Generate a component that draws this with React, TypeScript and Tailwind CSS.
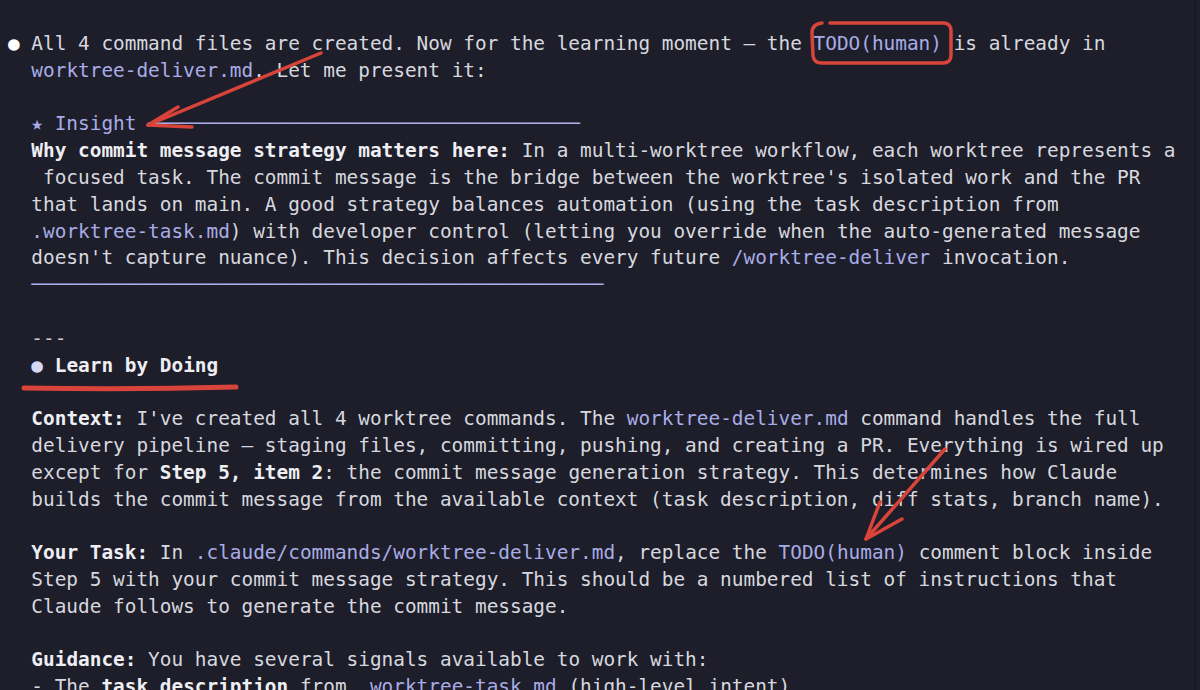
import type { ReactNode } from 'react'

function Code({ children }: { children: ReactNode }) {
  return <span className="text-[#a9ace6]">{children}</span>
}

function B({ children }: { children: ReactNode }) {
  return <span className="font-bold text-[#eeeef3]">{children}</span>
}

function Line({ children, className = '' }: { children?: ReactNode; className?: string }) {
  return <div className={`h-[26.8px] whitespace-pre ${className}`}>{children}</div>
}

const RED = '#d9443a'

function Annotations() {
  return (
    <svg className="pointer-events-none absolute inset-0" width={1200} height={690} viewBox="0 0 1200 690" fill="none">
      {/* box round TODO(human) */}
      <path
        d="M822 23 Q812 24 812 33 L813 56 Q814 63 822 63 L943 63 Q951 63 951 55 L951 31 Q951 23 943 23 L830 23"
        stroke={RED}
        strokeWidth={3.5}
        strokeLinecap="round"
        strokeLinejoin="round"
      />
      {/* arrow to Insight */}
      <path d="M321 53 L148 125" stroke={RED} strokeWidth={3.5} strokeLinecap="round" />
      <path d="M148 125 L192 127 M148 125 L178 107" stroke={RED} strokeWidth={3.5} strokeLinecap="round" />
      {/* underline Learn by Doing */}
      <path d="M24 388 Q130 390 236 387" stroke={RED} strokeWidth={5} strokeLinecap="round" />
      {/* arrow to TODO(human) */}
      <path d="M945 449 L866 539" stroke={RED} strokeWidth={3.5} strokeLinecap="round" />
      <path d="M866 539 L880 502 M866 539 L902 519" stroke={RED} strokeWidth={3.5} strokeLinecap="round" />
    </svg>
  )
}

export default function App() {
  return (
    <div className="relative flex h-[690px] w-[1200px] overflow-hidden bg-[#1d1e2a]">
      <div className="flex-1 pl-[8px] pt-[31px] font-['DejaVu_Sans_Mono',monospace] text-[19.4px] leading-[26.8px] text-[#d7d8df]">
        <Line>
          <span className="text-white">●</span> All 4 command files are created. Now for the learning moment — the{' '}
          <Code>TODO(human)</Code> is already in
        </Line>
        <Line>
          {'  '}
          <Code>worktree-deliver.md</Code>. Let me present it:
        </Line>
        <Line />
        <Line className="text-[#a9ace6]">{'  ★ Insight ' + '─'.repeat(37)}</Line>
        <Line>
          {'  '}
          <B>Why commit message strategy matters here:</B> In a multi-worktree workflow, each worktree represents a
        </Line>
        <Line>{'   focused task. The commit message is the bridge between the worktree\'s isolated work and the PR'}</Line>
        <Line>{'  that lands on main. A good strategy balances automation (using the task description from'}</Line>
        <Line>
          {'  '}
          <Code>.worktree-task.md</Code>) with developer control (letting you override when the auto-generated message
        </Line>
        <Line>
          {'  doesn\'t capture nuance). This decision affects every future '}
          <Code>/worktree-deliver</Code> invocation.
        </Line>
        <Line className="text-[#a9ace6]">{'  ' + '─'.repeat(49)}</Line>
        <Line />
        <Line className="text-[#c9cad2]">{'  ---'}</Line>
        <Line>
          {'  '}
          <span className="text-[#d6d9f6]">●</span> <B>Learn by Doing</B>
        </Line>
        <Line />
        <Line>
          {'  '}
          <B>Context:</B> I've created all 4 worktree commands. The <Code>worktree-deliver.md</Code> command handles the full
        </Line>
        <Line>{'  delivery pipeline — staging files, committing, pushing, and creating a PR. Everything is wired up'}</Line>
        <Line>
          {'  except for '}
          <B>Step 5, item 2</B>: the commit message generation strategy. This determines how Claude
        </Line>
        <Line>{'  builds the commit message from the available context (task description, diff stats, branch name).'}</Line>
        <Line />
        <Line>
          {'  '}
          <B>Your Task:</B> In <Code>.claude/commands/worktree-deliver.md</Code>, replace the <Code>TODO(human)</Code> comment block inside
        </Line>
        <Line>{'  Step 5 with your commit message strategy. This should be a numbered list of instructions that'}</Line>
        <Line>{'  Claude follows to generate the commit message.'}</Line>
        <Line />
        <Line>
          {'  '}
          <B>Guidance:</B> You have several signals available to work with:
        </Line>
        <Line>
          {'  - The '}
          <B>task description</B> from <Code>.worktree-task.md</Code> (high-level intent)
        </Line>
      </div>
      <div className="w-[5px] border-l border-[#15161f] bg-[#1f202c]" />
      <Annotations />
    </div>
  )
}
